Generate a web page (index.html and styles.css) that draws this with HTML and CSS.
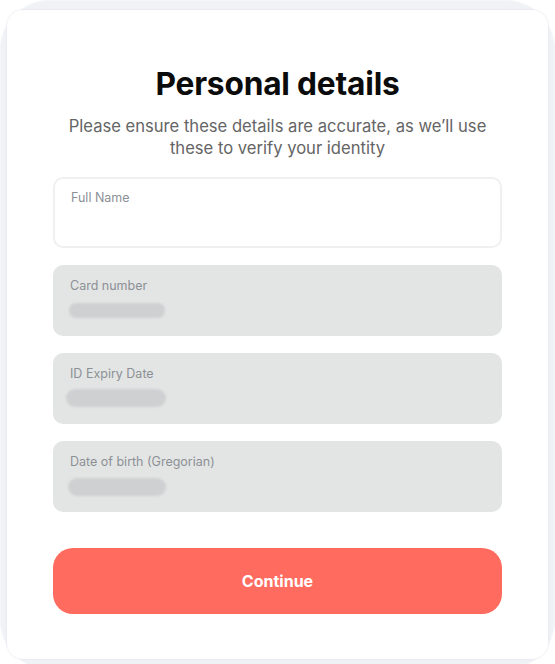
FILE: index.html
```html
<!DOCTYPE html>
<html>
<head>
<meta charset="utf-8">
<link rel="stylesheet" href="styles.css">
</head>
<body>
<div class="frame">
  <div class="card">
    <h1 class="title">Personal details</h1>
    <p class="subtitle">Please ensure these details are accurate, as we’ll use these to verify your identity</p>
    <div class="fields">
      <div class="field field-empty">
        <div class="label">Full Name</div>
      </div>
      <div class="field field-filled">
        <div class="label">Card number</div>
        <div class="smudge"></div>
      </div>
      <div class="field field-filled">
        <div class="label">ID Expiry Date</div>
        <div class="smudge smudge-b"></div>
      </div>
      <div class="field field-filled">
        <div class="label">Date of birth (Gregorian)</div>
        <div class="smudge smudge-c"></div>
      </div>
    </div>
    <button class="btn">Continue</button>
  </div>
</div>
</body>
</html>
```
FILE: styles.css
```css
html, body {
  margin: 0;
  padding: 0;
  background: #ffffff;
  overflow: hidden;
}
body {
  font-family: "Inter", "Liberation Sans", sans-serif;
}
.frame {
  box-sizing: border-box;
  width: 555px;
  height: 670px;
  padding: 10px 7px 11px 7px;
  border-radius: 50px;
  background: #f1f2f6;
  box-shadow: inset 0 0 0 1px #f5f6f9;
}
.card {
  box-sizing: border-box;
  height: 100%;
  background: #ffffff;
  border-radius: 16px;
  padding: 55px 46px 0 46px;
  display: flex;
  flex-direction: column;
  box-shadow: 0 0 2px rgba(200, 202, 215, 0.6);
}
.title {
  margin: 0;
  text-align: center;
  font-size: 31.7px;
  line-height: 37px;
  font-weight: 700;
  color: #0b0b0b;
  letter-spacing: -0.2px;
}
.subtitle {
  margin: 13px 0 0 0;
  text-align: center;
  font-size: 16.6px;
  line-height: 22px;
  color: #656565;
  padding: 0;
}
.fields {
  margin-top: 18px;
  display: flex;
  flex-direction: column;
  gap: 17px;
}
.field {
  box-sizing: border-box;
  height: 71px;
  border-radius: 10px;
  padding: 13px 17px 0 17px;
  position: relative;
}
.field-empty {
  background: #ffffff;
  border: 2px solid #eef0f1;
  padding: 11px 16px 0 16px;
}
.field-filled {
  background: #e3e5e4;
}
.label {
  font-size: 12.5px;
  line-height: 16px;
  color: #8c9096;
}
.smudge {
  margin-top: 9px;
  width: 96px;
  height: 15px;
  border-radius: 7px;
  background: #cfd0d1;
  filter: blur(1.2px);
  margin-left: -1px;
}
.smudge-b {
  width: 100px;
  height: 18px;
  margin-top: 7px;
  margin-left: -4px;
  border-radius: 9px;
}
.smudge-c {
  width: 98px;
  height: 18px;
  margin-top: 8px;
  margin-left: -2px;
  border-radius: 9px;
}
.btn {
  margin-top: 36px;
  height: 66px;
  border: none;
  border-radius: 20px;
  background: #ff6b5f;
  color: #ffffff;
  font-family: "Inter", "Liberation Sans", sans-serif;
  font-size: 16px;
  font-weight: 700;
  cursor: pointer;
}
```
